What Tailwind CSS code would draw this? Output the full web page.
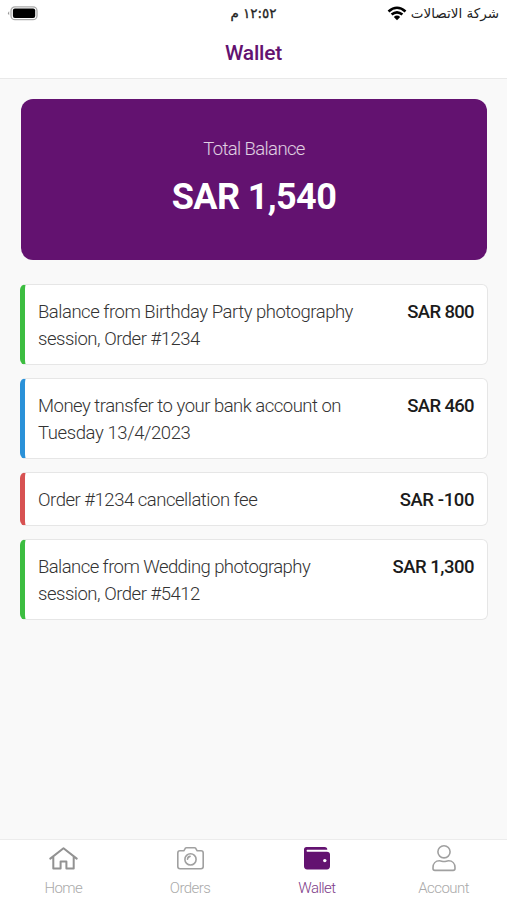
<!DOCTYPE html>
<html lang="en">
<head>
<meta charset="utf-8">
<title>Wallet</title>
<script src="https://cdn.jsdelivr.net/npm/@tailwindcss/browser@4"></script>
</head>
<body class="bg-[#f9f9f9] font-['Roboto','Noto_Sans',sans-serif]">
<div class="flex h-[900px] w-[507px] flex-col overflow-hidden">
  <header class="h-[79px] border-b border-[#e9e9e9] bg-white">
    <div class="grid h-[27px] grid-cols-3 items-center pr-2 pl-[7px] text-[#222]">
      <svg class="h-[15px] w-[31px]" viewBox="0 0 31 15" fill="none">
        <path d="M2.2 5.2Q-.2 7.2 2.2 9.2Z" fill="#999"/>
        <rect x="4" y=".9" width="26" height="12.800" rx="4" fill="#fff" stroke="#aaa" stroke-width="1.3"/>
        <rect x="5.900" y="2.6" width="22.3" height="9.4" rx="2" fill="#000"/>
      </svg>
      <div dir="rtl" lang="ar" class="pl-px text-center font-['DejaVu_Sans',sans-serif] text-[13.5px] tracking-[-0.2px] whitespace-nowrap [-webkit-text-stroke:0.3px_#222]">١٢:٥٢ م</div>
      <div dir="rtl" lang="ar" class="flex items-center gap-1 font-['DejaVu_Sans',sans-serif] text-[13.5px] whitespace-nowrap">
        <span>شركة الاتصالات</span>
        <svg class="h-[15px] w-[20px] shrink-0" viewBox="0 0 20 15" fill="none" stroke="#000" stroke-width="2.6">
          <path d="M1.5 5.5Q10-2 18.500 5.500M4.600 8.600Q10 4 15.400 8.600"/>
          <path d="M6.800 11Q10 8.200 13.200 11L10 14.200Z" fill="#000" stroke="none"/>
        </svg>
      </div>
    </div>
    <h1 class="pt-[11px] text-center text-[21px] leading-[30px] font-medium tracking-[-0.2px] text-[#631270]">Wallet</h1>
  </header>

  <main class="flex flex-1 flex-col pt-[20px] pr-[19px] pl-[20px]">
    <section class="mr-px ml-px flex h-[161px] flex-col items-center rounded-[12px] bg-[#631270] pt-[36px] text-white">
      <p class="text-[18.5px] leading-[28px] font-light tracking-[-0.62px] text-white/80">Total Balance</p>
      <p class="mt-[9px] text-[36px] leading-[50px] font-bold tracking-[-0.6px]">SAR 1,540</p>
    </section>
    <section class="mt-[24px] flex flex-col gap-[13px] text-[18.5px] leading-[27px] tracking-[-0.48px]">
      <article class="flex h-[81px] justify-between rounded-[6px] border border-l-[5px] border-[#e6e6e6] border-l-[#3cbd40] bg-white pt-[14px] pr-[13px] pl-[13px]">
        <p class="font-light whitespace-nowrap text-[#333]"><span>Balance from Birthday Party photography</span><br><span>session, Order #1234</span></p>
        <p class="font-medium tracking-[-0.65px] whitespace-nowrap text-[#1b1b1b]">SAR 800</p>
      </article>
      <article class="flex h-[81px] justify-between rounded-[6px] border border-l-[5px] border-[#e6e6e6] border-l-[#2a91d8] bg-white pt-[14px] pr-[13px] pl-[13px]">
        <p class="font-light whitespace-nowrap text-[#333]"><span class="tracking-[-0.5px]">Money transfer to your bank account on</span><br><span class="tracking-[-0.4px]">Tuesday 13/4/2023</span></p>
        <p class="font-medium tracking-[-0.65px] whitespace-nowrap text-[#1b1b1b]">SAR 460</p>
      </article>
      <article class="flex h-[54px] justify-between rounded-[6px] border border-l-[5px] border-[#e6e6e6] border-l-[#d75252] bg-white pt-[14px] pr-[13px] pl-[13px]">
        <p class="font-light whitespace-nowrap text-[#333]"><span>Order #1234 cancellation fee</span></p>
        <p class="font-medium tracking-[-0.4px] whitespace-nowrap text-[#1b1b1b]">SAR -100</p>
      </article>
      <article class="flex h-[81px] justify-between rounded-[6px] border border-l-[5px] border-[#e6e6e6] border-l-[#3cbd40] bg-white pt-[14px] pr-[13px] pl-[13px]">
        <p class="font-light whitespace-nowrap text-[#333]"><span class="tracking-[-0.57px]">Balance from Wedding photography</span><br><span>session, Order #5412</span></p>
        <p class="font-medium whitespace-nowrap text-[#1b1b1b]">SAR 1,300</p>
      </article>
    </section>
  </main>

  <nav class="grid h-[61px] grid-cols-4 border-t border-[#ececec] bg-white text-[15px] leading-[20px] font-light tracking-[-0.55px] text-[#aaa]">
    <a class="flex flex-col items-center pt-[4px]">
      <svg class="h-[30px] w-[30px]" viewBox="0 0 30 30" fill="none" stroke="#929292" stroke-width="2" stroke-linejoin="round" stroke-linecap="round"><path d="M2.300 14.600L15.500 4.200L28.700 14.600M5.300 12.600V24.600H12.600V17.400H18.400V24.600H25.700V12.600"/></svg>
      <span class="mt-[4px]">Home</span>
    </a>
    <a class="flex flex-col items-center pt-[4px]">
      <svg class="h-[30px] w-[30px]" viewBox="0 0 30 30" fill="none" stroke="#a0a0a0" stroke-width="1.600" stroke-linejoin="round" stroke-linecap="round"><path d="M5 6.800H8.800L10.300 4.300Q10.700 3.700 11.500 3.700H19.500Q20.300 3.700 20.700 4.300L22.200 6.800H26Q28.200 6.800 28.200 9V22.600Q28.200 24.800 26 24.800H5Q2.800 24.800 2.800 22.600V9Q2.800 6.800 5 6.800Z"/><circle cx="15.500" cy="15.400" r="5.600"/><path d="M12.500 15.200Q12.700 12.700 15.100 12.400"/></svg>
      <span class="mt-[4px]">Orders</span>
    </a>
    <a class="flex flex-col items-center pt-[4px] text-[#7d3a88]">
      <svg class="h-[30px] w-[30px]" viewBox="0 0 30 30"><path d="M4.500 3H22.500Q25.300 3 25.300 5.700H5.200Q4.600 5.700 4.600 6.700Q4.600 7.700 5.300 7.700H24.800Q28 7.700 28 10.600V22.300Q28 25.400 24.900 25.400H5.200Q2 25.400 2 22.300V5.500Q2 3 4.500 3Z" fill="#631270"/><circle cx="22.800" cy="16.600" r="1.700" fill="#fff"/></svg>
      <span class="mt-[4px]">Wallet</span>
    </a>
    <a class="flex flex-col items-center pt-[4px]">
      <svg class="h-[30px] w-[30px]" viewBox="0 0 30 30" fill="none" stroke="#a0a0a0" stroke-width="1.600"><circle cx="15" cy="7.800" r="6.100"/><path d="M10.500 16.800C12.500 16.800 13 17.500 15 17.500S17.500 16.800 19.500 16.800C23.500 16.800 26 19.600 26 23.500V24.600Q26 26.400 24.100 26.400H5.900Q4 26.400 4 24.600V23.500C4 19.600 6.500 16.800 10.500 16.800Z"/></svg>
      <span class="mt-[4px]">Account</span>
    </a>
  </nav>
</div>
</body>
</html>
